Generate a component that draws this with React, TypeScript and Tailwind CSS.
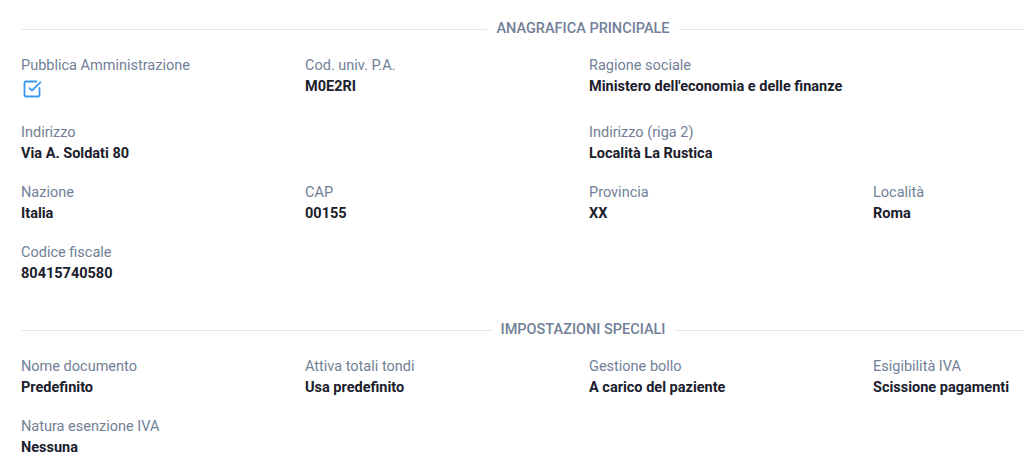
import { SquareCheckBig } from "lucide-react";

type Field = {
  label: string;
  value?: string;
  checked?: boolean;
  span?: string;
};

const anagrafica: Field[] = [
  { label: "Pubblica Amministrazione", checked: true },
  { label: "Cod. univ. P.A.", value: "M0E2RI" },
  { label: "Ragione sociale", value: "Ministero dell'economia e delle finanze", span: "col-span-2" },
  { label: "Indirizzo", value: "Via A. Soldati 80", span: "col-span-2" },
  { label: "Indirizzo (riga 2)", value: "Località La Rustica", span: "col-span-2" },
  { label: "Nazione", value: "Italia" },
  { label: "CAP", value: "00155" },
  { label: "Provincia", value: "XX" },
  { label: "Località", value: "Roma" },
  { label: "Codice fiscale", value: "80415740580" },
];

const speciali: Field[] = [
  { label: "Nome documento", value: "Predefinito" },
  { label: "Attiva totali tondi", value: "Usa predefinito" },
  { label: "Gestione bollo", value: "A carico del paziente" },
  { label: "Esigibilità IVA", value: "Scissione pagamenti" },
  { label: "Natura esenzione IVA", value: "Nessuna" },
];

const SectionTitle = ({ title }: { title: string }) => (
  <div className="flex items-center h-5 gap-[9px]">
    <div className="flex-1 border-t border-[#e2e8f0]" />
    <span className="text-[14.5px] font-medium uppercase text-[#718096] leading-5">{title}</span>
    <div className="flex-1 border-t border-[#e2e8f0]" />
  </div>
);

const FieldItem = ({ field }: { field: Field }) => (
  <div className={field.span}>
    <div className="text-[14.5px] leading-[21px] text-[#718096]">{field.label}</div>
    {field.checked ? (
      <div className="h-[28px] pt-[3px] pl-px">
        <SquareCheckBig className="size-[20px] text-[#3b99f0]" strokeWidth={2.2} />
      </div>
    ) : (
      <div className="text-[14.5px] leading-[21px] font-bold text-[#1a202c]">{field.value}</div>
    )}
  </div>
);

const Section = ({ title, fields }: { title: string; fields: Field[] }) => (
  <section>
    <SectionTitle title={title} />
    <div className="grid grid-cols-4 gap-x-3 gap-y-[18px] mt-4">
      {fields.map((f) => (
        <FieldItem key={f.label} field={f} />
      ))}
    </div>
  </section>
);

export default function App() {
  return (
    <div className="w-[1024px] h-[469px] overflow-hidden bg-white" style={{ fontFamily: "Roboto, 'Liberation Sans', sans-serif" }}>
      <div className="w-[1145px] pl-[21px] pt-[19px] flex flex-col gap-[36px]">
        <Section title="Anagrafica principale" fields={anagrafica} />
        <Section title="Impostazioni speciali" fields={speciali} />
      </div>
    </div>
  );
}
